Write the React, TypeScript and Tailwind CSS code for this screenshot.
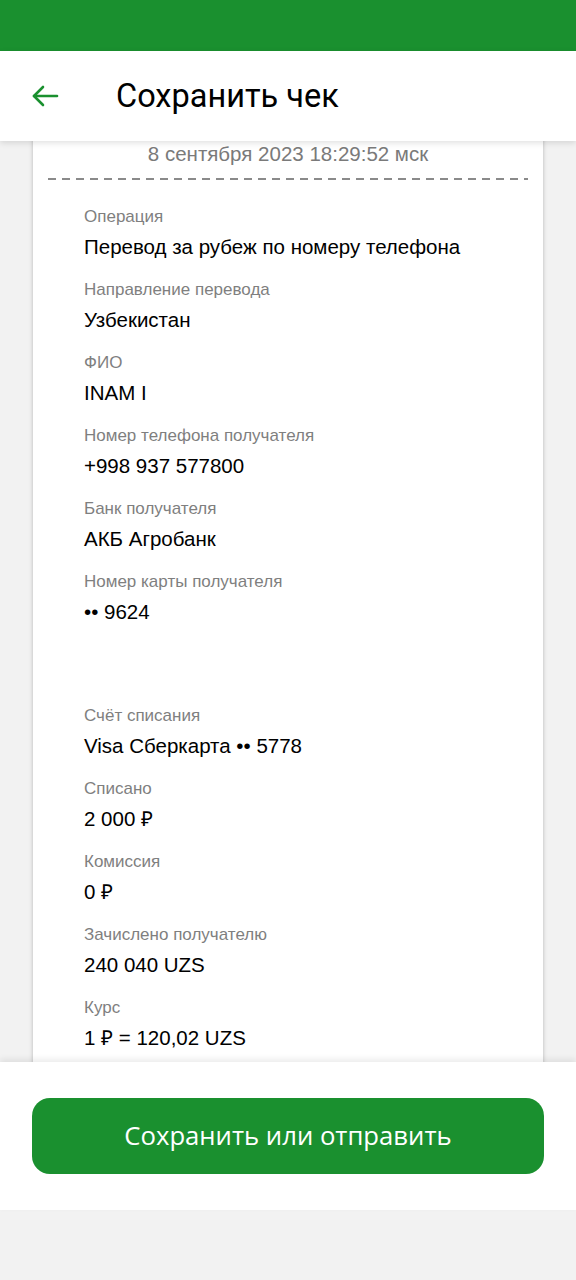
import { ReactNode } from "react";

const rowsTop = [
  { label: "Операция", value: "Перевод за рубеж по номеру телефона" },
  { label: "Направление перевода", value: "Узбекистан" },
  { label: "ФИО", value: "INAM I" },
  { label: "Номер телефона получателя", value: "+998 937 577800" },
  { label: "Банк получателя", value: "АКБ Агробанк" },
  { label: "Номер карты получателя", value: "•• 9624" },
];

const rowsBottom = [
  { label: "Счёт списания", value: "Visa Сберкарта •• 5778" },
  { label: "Списано", value: "2 000 ₽" },
  { label: "Комиссия", value: "0 ₽" },
  { label: "Зачислено получателю", value: "240 040 UZS" },
  { label: "Курс", value: "1 ₽ = 120,02 UZS" },
];

function Row({ label, value }: { label: string; value: ReactNode }) {
  return (
    <div className="flex flex-col">
      <span className="h-[20px] text-[17px] leading-[20px] text-[#7f7f7f]">{label}</span>
      <span className="mt-[7px] h-[26px] text-[20.5px] leading-[26px] text-black">{value}</span>
    </div>
  );
}

export default function App() {
  return (
    <div className="flex h-[1280px] w-[576px] flex-col bg-[#f2f2f2] font-['Roboto',sans-serif]">
      <div className="h-[51px] bg-[#1a902f]" />

      <header className="relative z-10 flex h-[90px] items-center bg-white shadow-[0_2px_6px_rgba(0,0,0,0.12)]">
        <svg
          viewBox="0 0 28 24"
          className="ml-[31px] h-[24px] w-[28px]"
          fill="none"
          stroke="#1a902f"
          strokeWidth={2.6}
          strokeLinecap="round"
          strokeLinejoin="round"
        >
          <path d="M26 12H3" />
          <path d="M12 3L3 12l9 9" />
        </svg>
        <h1 className="ml-[57px] text-[32.5px] leading-none text-black">Сохранить чек</h1>
      </header>

      <main className="relative h-[921px] overflow-hidden">
        <div className="mx-[33px] -mt-[10px] bg-white px-[15px] pt-[11px] font-['Liberation_Sans',Arial,sans-serif] shadow-[0_0_4px_rgba(0,0,0,0.25)]">
          <p className="h-[24px] text-center text-[20.5px] leading-[24px] text-[#7a7a7a]">
            8 сентября 2023 18:29:52 мск
          </p>
          <div className="mt-[12px] h-[2px] bg-[repeating-linear-gradient(90deg,#8a8a8a_0_8px,transparent_8px_14px)]" />

          <div className="flex flex-col gap-[20px] px-[36px] pt-[27px]">
            {rowsTop.map((r) => (
              <Row key={r.label} label={r.label} value={r.value} />
            ))}
            <div className="h-[41px]" />
            {rowsBottom.map((r) => (
              <Row key={r.label} label={r.label} value={r.value} />
            ))}
            <div className="h-[40px]" />
          </div>
        </div>
      </main>

      <div className="relative z-10 flex h-[148px] items-center bg-white px-[32px] shadow-[0_-3px_6px_rgba(0,0,0,0.08)]">
        <button
          type="button"
          className="h-[76px] w-full rounded-[18px] bg-[#1a902f] font-['Open_Sans',sans-serif] text-[25.7px] text-white"
        >
          Сохранить или отправить
        </button>
      </div>

      <div className="flex-1 bg-[#f2f2f2]" />
    </div>
  );
}
